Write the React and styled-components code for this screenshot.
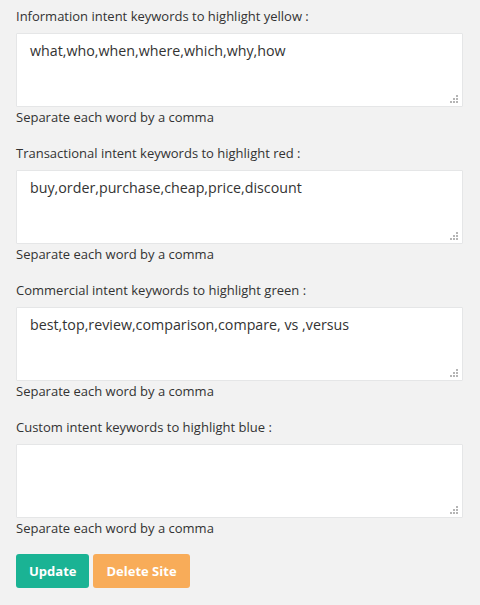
import styled, { createGlobalStyle } from 'styled-components';

const GlobalStyle = createGlobalStyle`
  html, body {
    margin: 0;
    padding: 0;
    background: #f2f2f2;
    font-family: 'Open Sans', 'Noto Sans', sans-serif;
    color: #333;
  }
`;

const FIELDS = [
  {
    label: 'Information intent keywords to highlight yellow :',
    value: 'what,who,when,where,which,why,how',
  },
  {
    label: 'Transactional intent keywords to highlight red :',
    value: 'buy,order,purchase,cheap,price,discount',
  },
  {
    label: 'Commercial intent keywords to highlight green :',
    value: 'best,top,review,comparison,compare, vs ,versus',
  },
  {
    label: 'Custom intent keywords to highlight blue :',
    value: '',
  },
];

// dotted resize grip, like the old webkit textarea corner
const Grip = () => (
  <GripIcon width="9" height="9" viewBox="0 0 9 9">
    <rect x="6" y="0" width="2" height="2" />
    <rect x="3" y="3" width="2" height="2" />
    <rect x="6" y="3" width="2" height="2" />
    <rect x="0" y="6" width="2" height="2" />
    <rect x="3" y="6" width="2" height="2" />
    <rect x="6" y="6" width="2" height="2" />
  </GripIcon>
);

const App = () => {
  return (
    <>
      <GlobalStyle />
      <Form onSubmit={(e) => e.preventDefault()}>
        {FIELDS.map((field) => (
          <Field key={field.label}>
            <Label>{field.label}</Label>
            <AreaWrap>
              <TextArea defaultValue={field.value} />
              <Grip />
            </AreaWrap>
            <Help>Separate each word by a comma</Help>
          </Field>
        ))}
        <Actions>
          <Button type="submit" $color="#1ab394">
            Update
          </Button>
          <Button type="button" $color="#f8ac59">
            Delete Site
          </Button>
        </Actions>
      </Form>
    </>
  );
};

const Form = styled.form`
  display: flex;
  flex-direction: column;
  gap: 16px;
  padding: 6px 17px 0 16px;
`;

const Field = styled.div`
  display: flex;
  flex-direction: column;
`;

const Label = styled.label`
  font-size: 13px;
  line-height: 20px;
  margin-bottom: 7px;
  color: #333;
`;

const AreaWrap = styled.div`
  position: relative;
  display: flex;
`;

const TextArea = styled.textarea`
  box-sizing: border-box;
  width: 100%;
  height: 74px;
  margin: 0;
  padding: 7px 13px;
  border: 1px solid #e5e6e7;
  border-radius: 1px;
  background: #fff;
  font-family: 'Open Sans', 'Noto Sans', sans-serif;
  font-size: 14.25px;
  line-height: 20px;
  color: #333;
  resize: none;
  outline: none;
`;

const GripIcon = styled.svg`
  position: absolute;
  right: 4px;
  bottom: 3px;
  fill: #b5b5b5;
  pointer-events: none;
`;

const Help = styled.span`
  font-size: 13px;
  line-height: 20px;
  color: #333;
`;

const Actions = styled.div`
  display: flex;
  gap: 4px;
`;

const Button = styled.button`
  height: 34px;
  padding: 0 13px;
  border: none;
  border-radius: 3px;
  background: ${(p) => p.$color};
  color: #fff;
  font-family: 'Open Sans', 'Noto Sans', sans-serif;
  font-size: 13px;
  font-weight: 700;
  cursor: pointer;
`;

export default App;
